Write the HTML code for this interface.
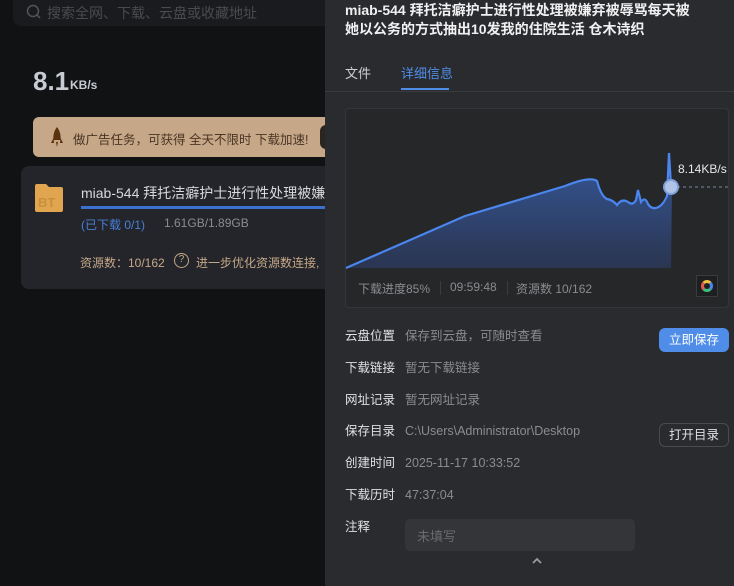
<!DOCTYPE html>
<html><head><meta charset="utf-8"><style>
*{margin:0;padding:0;box-sizing:border-box}
body{width:734px;height:586px;overflow:hidden;background:#111214;font-family:"Liberation Sans","Noto Sans CJK SC",sans-serif;position:relative;color:#ddd}
.a{position:absolute;white-space:nowrap}
.l{position:absolute;left:345px;font-size:12.5px;color:#e0e0e2;line-height:16px}
.v{position:absolute;left:405px;font-size:12.5px;color:#8a8c90;line-height:16px}
</style></head><body>
<div class="a" style="left:13px;top:-8px;width:330px;height:34px;background:#1a1b1e;border-radius:8px"></div>
<svg class="a" style="left:26px;top:4px" width="16" height="16" viewBox="0 0 16 16"><circle cx="7" cy="7" r="5.5" fill="none" stroke="#555" stroke-width="1.5"/><path d="M11 11l3 3" stroke="#555" stroke-width="1.5"/></svg>
<div class="a" style="left:47px;top:3px;font-size:14px;color:#4a4b4e">搜索全网、下载、云盘或收藏地址</div>
<div class="a" style="left:33px;top:66px;font-size:26px;font-weight:bold;color:#c8ccd2">8.1</div>
<div class="a" style="left:70px;top:78px;font-size:12px;font-weight:bold;color:#c8ccd2">KB/s</div>
<div class="a" style="left:33px;top:117px;width:310px;height:40px;background:#c6a888;border-radius:6px"></div>
<svg class="a" style="left:49px;top:126px" width="16" height="22" viewBox="0 0 16 22"><path d="M8 1C5 5 4 9 4.5 14h7C12 9 11 5 8 1z" fill="#5a3210"/><path d="M4.5 12L2 17h3zM11.5 12L14 17h-3z" fill="#5a3210"/><path d="M7 16h2l-1 5z" fill="#5a3210"/></svg>
<div class="a" style="left:73px;top:129px;font-size:12.5px;color:#4a3524">做广告任务，可获得 全天不限时 下载加速!</div>
<div class="a" style="left:320px;top:125px;width:20px;height:24px;background:#2a2520;border-radius:6px"></div>
<div class="a" style="left:21px;top:166px;width:320px;height:123px;background:#23252a;border-radius:8px"></div>
<svg class="a" style="left:33px;top:182px" width="32" height="32" viewBox="0 0 32 32"><path d="M2 4q0-2 2-2h9l3 3h12q2 0 2 2v21q0 2-2 2H4q-2 0-2-2z" fill="#e0a54e"/><text x="5" y="25" font-size="13" font-weight="bold" fill="#c9903c" font-family="Liberation Sans">BT</text></svg>
<div class="a" style="left:81px;top:183px;font-size:14px;color:#d8d8da">miab-544 拜托洁癖护士进行性处理被嫌弃</div>
<div class="a" style="left:81px;top:206px;width:244px;height:3px;background:#3b6fd0"></div>
<div class="a" style="left:81px;top:216px;font-size:12px;color:#4a7fd8">(已下载 0/1)</div>
<div class="a" style="left:164px;top:216px;font-size:12px;color:#8a8c90">1.61GB/1.89GB</div>
<div class="a" style="left:80px;top:254px;font-size:12px;color:#c6a888">资源数：10/162</div>
<div class="a" style="left:174px;top:253px;width:15px;height:15px;border:1.5px solid #c6a888;border-radius:50%;font-size:10px;color:#c6a888;text-align:center;line-height:12px">?</div>
<div class="a" style="left:196px;top:254px;font-size:12px;color:#c6a888">进一步优化资源数连接,</div>
<div class="a" style="left:325px;top:0;width:409px;height:586px;background:#2a2b2e"></div>
<div class="a" style="left:345px;top:1px;font-size:14px;font-weight:bold;color:#f0f0f2;line-height:19px">miab-544 拜托洁癖护士进行性处理被嫌弃被辱骂每天被<br>她以公务的方式抽出10发我的住院生活 仓木诗织</div>
<div class="a" style="left:345px;top:63px;font-size:13px;color:#d0d0d2">文件</div>
<div class="a" style="left:401px;top:63px;font-size:13px;color:#4f8de8">详细信息</div>
<div class="a" style="left:401px;top:88px;width:48px;height:2px;background:#4f8de8"></div>
<div class="a" style="left:325px;top:91px;width:409px;height:1px;background:#3a3b3e"></div>
<div class="a" style="left:345px;top:108px;width:384px;height:200px;background:#262729;border:1px solid #35363a;border-radius:4px"></div>
<svg class="a" style="left:345px;top:108px" width="384" height="200" viewBox="0 0 384 200">
<defs><linearGradient id="g" x1="0" y1="0" x2="0" y2="1"><stop offset="0" stop-color="#34538f"/><stop offset="1" stop-color="#2a3550"/></linearGradient></defs>
<path d="M1 160 L120 108 L220 78 Q245 68 252 73 Q256 88 262 91 Q268 92 272 97 Q277 90 283 94 Q288 98 291 92 L293 82 L296 94 Q300 88 303 96 Q306 101 311 100 Q318 98 322 92 L326 60 L327 79 L326 160 Z" fill="url(#g)"/>
<path d="M1 160 L120 108 L220 78 Q245 68 252 73 Q256 88 262 91 Q268 92 272 97 Q277 90 283 94 Q288 98 291 92 L293 82 L296 94 Q300 88 303 96 Q306 101 311 100 Q318 98 322 88 L324 45 L326 79" fill="none" stroke="#4a86ee" stroke-width="2.2"/>
<path d="M326 79 H384" stroke="#7a8aa8" stroke-dasharray="3 3"/>
<circle cx="326" cy="79" r="7" fill="#b0c4e8" stroke="#7fa0d8" stroke-width="2"/>
<text x="333" y="65" font-size="12" fill="#e8e8ea" font-family="Liberation Sans">8.14KB/s</text>
</svg>
<div class="a" style="left:358px;top:280px;font-size:12px;color:#8a8c90">下载进度85%</div>
<div class="a" style="left:440px;top:281px;width:1px;height:14px;background:#3a3b3e"></div>
<div class="a" style="left:450px;top:280px;font-size:12px;color:#8a8c90">09:59:48</div>
<div class="a" style="left:507px;top:281px;width:1px;height:14px;background:#3a3b3e"></div>
<div class="a" style="left:516px;top:280px;font-size:12px;color:#8a8c90">资源数 10/162</div>
<div class="a" style="left:696px;top:275px;width:22px;height:22px;border:1px solid #3a3b3e;background:#1e1f21"></div>
<div class="a" style="left:701px;top:280px;width:12px;height:12px;border-radius:50%;border:3px solid;border-color:#f3c23c #4a86ee #3cc07a #e85a4f"></div>
<div class="l" style="top:328px">云盘位置</div><div class="v" style="top:328px">保存到云盘，可随时查看</div>
<div class="l" style="top:360px">下载链接</div><div class="v" style="top:360px">暂无下载链接</div>
<div class="l" style="top:392px">网址记录</div><div class="v" style="top:392px">暂无网址记录</div>
<div class="l" style="top:423px">保存目录</div><div class="v" style="top:423px">C:\Users\Administrator\Desktop</div>
<div class="l" style="top:455px">创建时间</div><div class="v" style="top:455px">2025-11-17 10:33:52</div>
<div class="l" style="top:487px">下载历时</div><div class="v" style="top:487px">47:37:04</div>
<div class="l" style="top:519px">注释</div>
<div class="a" style="left:659px;top:328px;width:70px;height:24px;background:#4f8de8;border-radius:6px;font-size:12.5px;color:#fff;text-align:center;line-height:24px">立即保存</div>
<div class="a" style="left:659px;top:423px;width:70px;height:24px;border:1px solid #4a4b4e;border-radius:6px;font-size:12.5px;color:#e0e0e2;text-align:center;line-height:22px">打开目录</div>
<div class="a" style="left:405px;top:519px;width:230px;height:32px;background:#343539;border-radius:5px"></div>
<div class="a" style="left:417px;top:526px;font-size:13px;color:#6a6b6e">未填写</div>
<svg class="a" style="left:531px;top:557px" width="12" height="8" viewBox="0 0 12 8"><path d="M2 6l4-4 4 4" fill="none" stroke="#9a9ba0" stroke-width="1.8"/></svg>
</body></html>
